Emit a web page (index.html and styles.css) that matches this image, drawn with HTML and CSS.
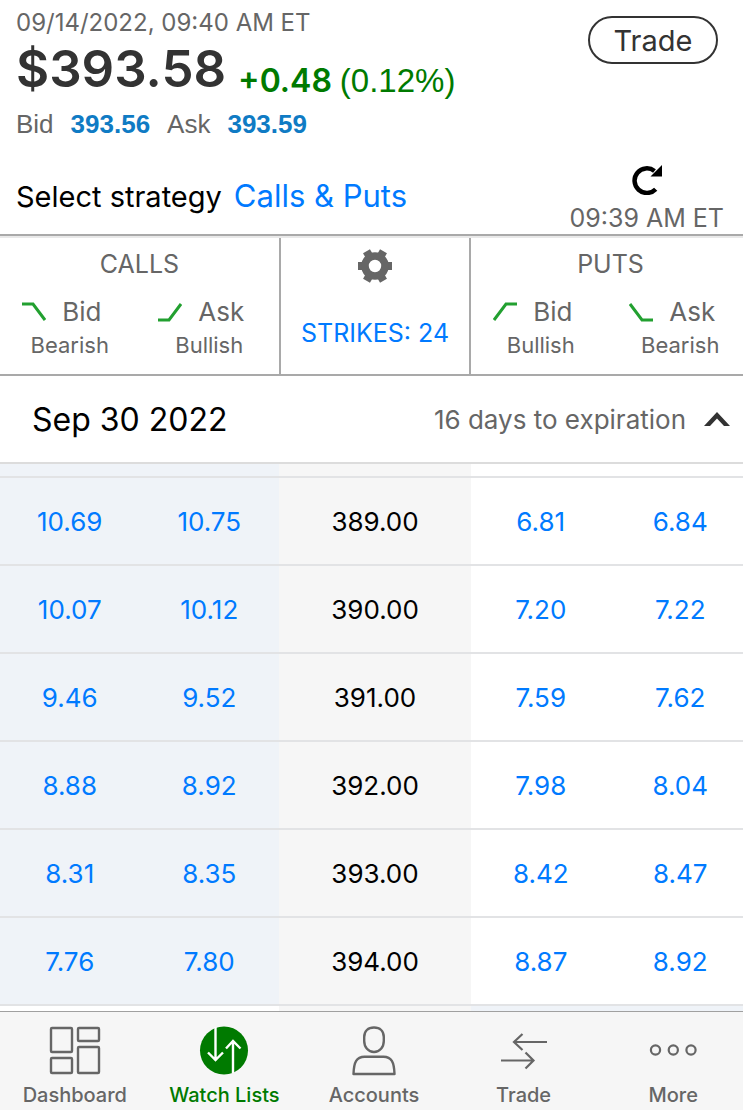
FILE: index.html
```html
<!DOCTYPE html>
<html lang="en">
<head>
<meta charset="utf-8">
<meta name="viewport" content="width=device-width, initial-scale=1">
<title>Option chain</title>
<link rel="stylesheet" href="styles.css">
</head>
<body>
<div class="app">
  <header class="quote">
    <div class="quote-main">
      <div class="timestamp">09/14/2022, 09:40 AM ET</div>
      <div class="price-line">
        <span class="price">$393.58</span>
        <span class="change">+0.48</span>
        <span class="percent">(0.12%)</span>
      </div>
      <div class="bid-ask">
        <span>Bid</span><b>393.56</b><span>Ask</span><b>393.59</b>
      </div>
    </div>
    <button class="trade-button" type="button">Trade</button>
  </header>

  <section class="strategy">
    <div class="strategy-pick">
      <span>Select strategy</span>
      <a href="#strategy">Calls &amp; Puts</a>
    </div>
    <div class="refresh">
      <button class="icon-button" type="button" aria-label="Refresh">
        <svg width="30" height="30" viewBox="0 0 30 30"><path d="M23.700 24.200A12.300 12.300 0 1 1 22.500 6" fill="none" stroke="#000" stroke-width="4.500"/><path d="M30 0v11.500H18.500z"/></svg>
      </button>
      <span>09:39 AM ET</span>
    </div>
  </section>

  <section class="legend">
    <div class="side">
      <h2>CALLS</h2>
      <div class="leg">
        <div class="leg-name"><svg width="24" height="20" viewBox="0 0 24 20"><path d="M0 2h11l12 16"/></svg>Bid</div>
        <div class="leg-view">Bearish</div>
      </div>
      <div class="leg">
        <div class="leg-name"><svg width="24" height="20" viewBox="0 0 24 20"><path d="M0 18h11L23 2"/></svg>Ask</div>
        <div class="leg-view">Bullish</div>
      </div>
    </div>
    <div class="strikes">
      <button class="icon-button" type="button" aria-label="Settings">
        <svg width="34" height="34" viewBox="0 0 34 34"><g fill="#666"><path id="tooth" d="M13 17V13H0v8h13z"/><use href="#tooth" transform="rotate(60 17 17)"/><use href="#tooth" transform="rotate(120 17 17)"/><use href="#tooth" transform="rotate(180 17 17)"/><use href="#tooth" transform="rotate(240 17 17)"/><use href="#tooth" transform="rotate(300 17 17)"/></g><circle cx="17" cy="17" r="10" fill="#fff" stroke="#666" stroke-width="7.6"/></svg>
      </button>
      <a href="#strikes">STRIKES: 24</a>
    </div>
    <div class="side">
      <h2>PUTS</h2>
      <div class="leg">
        <div class="leg-name"><svg width="24" height="20" viewBox="0 0 24 20"><path d="M1 18L13 2h11"/></svg>Bid</div>
        <div class="leg-view">Bullish</div>
      </div>
      <div class="leg">
        <div class="leg-name"><svg width="24" height="20" viewBox="0 0 24 20"><path d="M1 2l12 16h11"/></svg>Ask</div>
        <div class="leg-view">Bearish</div>
      </div>
    </div>
  </section>

  <button class="expiration" type="button" aria-expanded="true">
    <span class="expiration-date">Sep 30 2022</span>
    <span class="expiration-days">16 days to expiration</span>
    <svg width="26" height="14" viewBox="0 0 26 14"><path d="M0 14L13 0l13 14h-6l-7-7.500-7 7.500z" fill="#333"/></svg>
  </button>

  <table class="chain">
    <colgroup><col class="col-quote"><col class="col-quote"><col class="col-strike"><col class="col-quote"><col class="col-quote"></colgroup>
    <tbody>
      <tr class="cut-top"><td></td><td></td><td></td><td></td><td></td></tr>
      <tr><td><a href="#c">10.69</a></td><td><a href="#c">10.75</a></td><th scope="row">389.00</th><td><a href="#p">6.81</a></td><td><a href="#p">6.84</a></td></tr>
      <tr><td><a href="#c">10.07</a></td><td><a href="#c">10.12</a></td><th scope="row">390.00</th><td><a href="#p">7.20</a></td><td><a href="#p">7.22</a></td></tr>
      <tr><td><a href="#c">9.46</a></td><td><a href="#c">9.52</a></td><th scope="row">391.00</th><td><a href="#p">7.59</a></td><td><a href="#p">7.62</a></td></tr>
      <tr><td><a href="#c">8.88</a></td><td><a href="#c">8.92</a></td><th scope="row">392.00</th><td><a href="#p">7.98</a></td><td><a href="#p">8.04</a></td></tr>
      <tr><td><a href="#c">8.31</a></td><td><a href="#c">8.35</a></td><th scope="row">393.00</th><td><a href="#p">8.42</a></td><td><a href="#p">8.47</a></td></tr>
      <tr><td><a href="#c">7.76</a></td><td><a href="#c">7.80</a></td><th scope="row">394.00</th><td><a href="#p">8.87</a></td><td><a href="#p">8.92</a></td></tr>
      <tr class="cut-bottom"><td></td><td></td><td></td><td></td><td></td></tr>
    </tbody>
  </table>

  <nav class="tabs">
    <a href="#dashboard">
      <svg width="52" height="52" viewBox="0 0 52 52"><g fill="none" stroke="#666" stroke-width="2.400"><rect x="2" y="3" width="21" height="24" rx="1"/><rect x="29" y="3" width="21" height="13" rx="1"/><rect x="2" y="33" width="21" height="15" rx="1"/><rect x="29" y="22" width="21" height="26" rx="1"/></g></svg>
      Dashboard
    </a>
    <a href="#watch" class="active" aria-current="page">
      <svg width="52" height="52" viewBox="0 0 52 52"><circle cx="26" cy="25.500" r="24" fill="#007a00"/><g fill="none" stroke="#fff" stroke-width="2.400"><path d="M17.500 2v33M10 27.500l7.500 7.500 7.500-7.500M35 48V16M28 23.500l7-7.500 7.500 7.500"/></g></svg>
      Watch Lists
    </a>
    <a href="#accounts">
      <svg width="52" height="52" viewBox="0 0 52 52"><g fill="none" stroke="#666" stroke-width="2.400"><path d="M26 2.500c6 0 9.800 3.500 9.800 9.500v4c0 6-4 11-9.800 11s-9.800-5-9.800-11v-4c0-6 3.800-9.500 9.800-9.500z"/><path d="M5.500 49c.4-12 3-17.200 11-17.200h19c8 0 10.600 5.200 11 17.200z" stroke-linejoin="round"/></g></svg>
      Accounts
    </a>
    <a href="#trade">
      <svg width="52" height="52" viewBox="0 0 52 52"><path d="M49 17H17M24.500 9L16 17l8.500 8M3 35.500h31M27.500 27.500l8 8-8 8" fill="none" stroke="#666" stroke-width="2.200"/></svg>
      Trade
    </a>
    <a href="#more">
      <svg width="52" height="52" viewBox="0 0 52 52"><g fill="none" stroke="#666" stroke-width="2.200"><circle cx="8.500" cy="25" r="4.600"/><circle cx="26.300" cy="25" r="4.600"/><circle cx="44" cy="25" r="4.600"/></g></svg>
      More
    </a>
  </nav>
</div>
</body>
</html>
```
FILE: styles.css
```css
* { box-sizing: border-box; }
body {
  margin: 0;
  overflow-x: hidden;
  background: #fff;
  color: #666;
  font-family: Inter, "Liberation Sans", sans-serif;
  font-size: 26px;
}
a { color: #007aff; text-decoration: none; }
button { font: inherit; cursor: pointer; }
svg { display: block; }
.app {
  display: flex;
  flex-direction: column;
  width: calc(100% + 7px);
  min-height: 100vh;
}
.icon-button { padding: 0; border: 0; background: none; }

.quote {
  display: flex;
  justify-content: space-between;
  align-items: flex-start;
  padding: 8px 32px 0 16px;
}
.timestamp { font-size: 24px; line-height: 30px; }
.price-line {
  display: flex;
  align-items: flex-end;
  line-height: 38px;
  color: #007a00;
}
.price { margin-right: 12px; font-size: 51px; font-weight: 600; line-height: 62px; color: #333; }
.change { margin-right: 8px; font-size: 32px; font-weight: 600; }
.percent { font-family: "Liberation Sans", sans-serif; font-size: 33px; }
.bid-ask {
  display: flex;
  gap: 17px;
  font-family: "Liberation Sans", sans-serif;
  font-size: 26px;
  line-height: 48px;
}
.bid-ask b { color: #0f7bc4; }
.trade-button {
  width: 130px;
  height: 48px;
  margin-top: 8px;
  padding: 0;
  border: 2px solid #333;
  border-radius: 24px;
  background: #fff;
  color: #333;
  font-size: 29px;
}

.strategy {
  display: flex;
  justify-content: space-between;
  align-items: center;
  height: 86px;
  padding: 16px 26px 0 16px;
}
.strategy-pick {
  display: flex;
  align-items: baseline;
  gap: 12px;
  margin-bottom: 8px;
  color: #000;
  font-size: 29px;
}
.strategy-pick a { font-size: 31px; }
.refresh {
  display: flex;
  flex-direction: column;
  align-items: center;
  gap: 8px;
  font-size: 25px;
  line-height: 30px;
}

.legend {
  display: grid;
  grid-template-columns: minmax(0, 279fr) minmax(0, 192fr) minmax(0, 279fr);
  height: 142px;
  border-top: 2px solid #a9a9a9;
  border-bottom: 2px solid #a9a9a9;
  box-shadow: inset 0 2px #e9e9e9;
}
.side {
  display: grid;
  grid-template-columns: 1fr 1fr;
  grid-template-rows: 52px auto;
  margin-top: 2px;
  text-align: center;
}
.side h2 {
  grid-column: 1 / -1;
  margin: 0;
  font-size: 25px;
  font-weight: 400;
  line-height: 52px;
}
.leg-name {
  display: flex;
  justify-content: center;
  align-items: center;
  gap: 16px;
  margin-right: 16px;
  line-height: 44px;
}
.leg-name path { fill: none; stroke: #22a030; stroke-width: 3; }
.leg-view { font-size: 22px; line-height: 22px; }
.strikes {
  display: flex;
  flex-direction: column;
  align-items: center;
  gap: 34px;
  margin-top: 2px;
  padding-top: 11px;
  border: solid #a9a9a9;
  border-width: 0 2px;
  font-size: 25px;
  line-height: 32px;
}

.expiration {
  display: flex;
  align-items: center;
  height: 88px;
  padding: 0 20px 0 32px;
  border: 0;
  border-bottom: 2px solid #dcdcdc;
  background: #fff;
  color: #666;
  text-align: left;
}
.expiration-date { margin-right: auto; color: #000; font-size: 32px; }
.expiration-days { margin-right: 18px; }

.chain {
  width: 100%;
  border-spacing: 0;
  table-layout: fixed;
  text-align: center;
}
.col-quote { width: 18.6%; }
.col-strike { width: 25.6%; }
.chain td, .chain th {
  height: 88px;
  padding: 0;
  border-bottom: 2px solid #e2e3e5;
  font-weight: 400;
}
.chain td:nth-child(-n+2) { background: #eff3f8; }
.chain th, .chain td:nth-child(3) { background: #f6f6f6; color: #000; }
.chain .cut-top td { height: 14px; }
.chain .cut-bottom td { height: 5px; border: 0; }
.chain .cut-bottom td:nth-child(-n+2) { background: #fff; }
.chain .cut-bottom td:nth-child(n+4) { background: #eff3f8; }

.tabs {
  display: grid;
  grid-template-columns: repeat(5, 1fr);
  flex: 1;
  padding-right: 2px;
  border-top: 1px solid #a0a0a0;
  background: #f6f6f6;
}
.tabs a {
  display: flex;
  flex-direction: column;
  align-items: center;
  gap: 3px;
  padding-top: 13px;
  color: #666;
  font-size: 20px;
  font-weight: 500;
  line-height: 30px;
}
.tabs .active { color: #007a00; }
```
